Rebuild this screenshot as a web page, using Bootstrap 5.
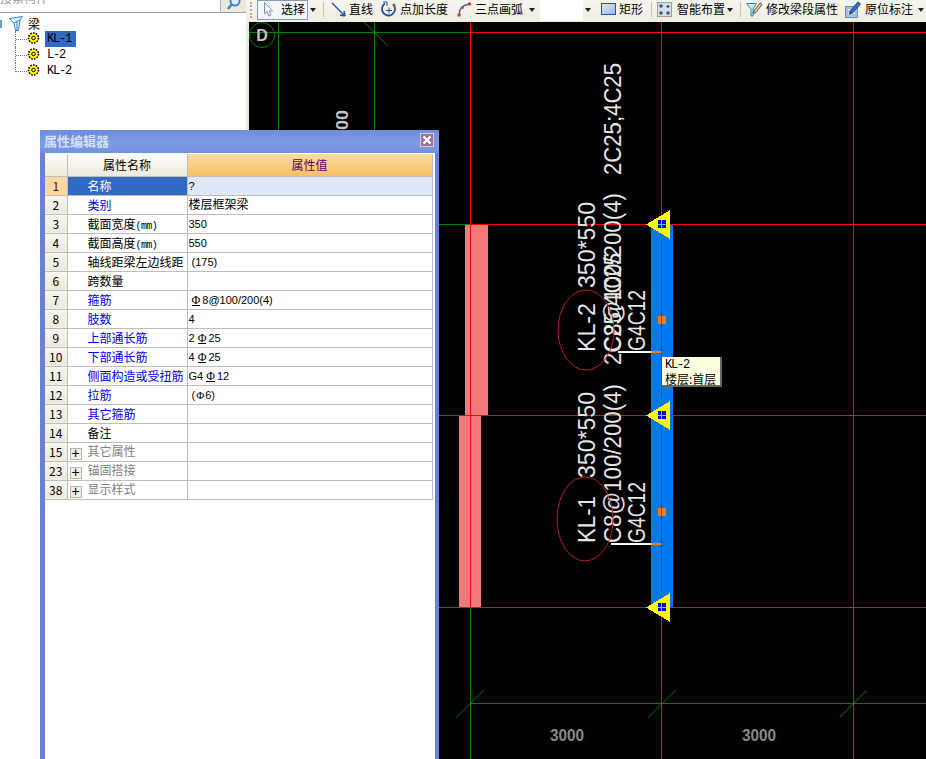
<!DOCTYPE html>
<html lang="zh-CN">
<head>
  <meta charset="UTF-8">
  <title>属性编辑器</title>
  <link href="https://cdn.jsdelivr.net/npm/bootstrap@5.3.3/dist/css/bootstrap.min.css" rel="stylesheet">
  <style>
    html, body { width: 926px; height: 759px; overflow: hidden; }
    body { position: relative; background: #fff; color: #000; font: 12px/16px "Noto Sans CJK SC", "Liberation Sans", sans-serif; }

    /* left tree */
    .tree-pane { width: 246px; flex: none; background: #fff; }
    .find-bar { height: 13px; border-bottom: 1px solid #8aa4b8; }
    .find-text { flex: 1; overflow: hidden; color: #9a9aa0; line-height: 12px; }
    .find-text span { display: block; margin-top: -8px; }
    .find-btn { width: 26px; background: #ece9d8; border-left: 1px solid #a8b8c4; overflow: hidden; }
    .tree-root { height: 15px; margin-top: 3px; }
    .twig { width: 2px; height: 8px; background: #6a9ac0; margin-right: 7px; }
    .root-name { margin-left: 5px; }
    .tree-list { list-style: none; margin: 0 0 0 15px; padding: 0; }
    .tree-list li { height: 16px; display: flex; border-left: 1px dotted #777; }
    .tree-list li:last-child { border-left: 0; }
    .conn { width: 11px; height: 9px; border-bottom: 1px dotted #777; }
    .tree-list li:last-child .conn { width: 12px; border-left: 1px dotted #777; }
    .lbl { margin-left: 5px; padding: 1px 2px 0; min-width: 31px; line-height: 15px; }
    .lbl.on { background: #316ac5; }
    .lat { font-family: "Liberation Mono", monospace; letter-spacing: -1.2px; }

    /* toolbar */
    .tool-strip { height: 22px; padding-left: 4px; background: linear-gradient(#f7f6ee, #efede0); white-space: nowrap; }
    .grip { width: 2px; height: 16px; margin-top: 2px; border-left: 2px dotted #b0ad98; }
    .tool { display: flex; align-items: center; gap: 3px; height: 20px; padding-bottom: 2px; }
    .tool-on { width: 51px; margin-left: 5px; padding-left: 6px; gap: 8px; background: #f4f6fb; border: 1px solid #7f9db9; }
    .caret-box { width: 10px; height: 20px; display: flex; justify-content: center; align-items: center; }
    .caret-box::after { content: ""; border: 3px solid transparent; border-top: 4px solid #222; border-bottom: 0; }
    .sep { width: 1px; height: 15px; margin-top: 2px; background: #c6c3b0; }
    .tool-field { width: 43px; height: 21px; background: #fff; }
    .l2 { margin-left: 2px; } .l3 { margin-left: 3px; } .l4 { margin-left: 4px; } .l5 { margin-left: 5px; }
    .l7 { margin-left: 7px; } .l8 { margin-left: 8px; } .l9 { margin-left: 9px; }
    .gap5 { gap: 5px; } .gap4 { gap: 4px; }

    /* drawing */
    .draw-wrap { position: relative; padding-left: 3px; background: #ece9d8; }
    .draw-wrap svg { display: block; background: #000; }
    .cad-txt { font-family: "Liberation Sans", sans-serif; font-size: 23px; fill: #e6e6e6; }
    .cad-dim { font-family: "Liberation Sans", sans-serif; font-size: 16px; font-weight: 700; fill: #8a8a8a; }
    .cad-dim.lite { fill: #c4c4c4; }
    .hint { position: absolute; left: 416px; top: 335px; width: 60px; height: 30px; padding: 1px 0 0 3px; background: #ffffe1; border-right: 2px solid #666; border-bottom: 2px solid #666; line-height: 14px; white-space: nowrap; }

    /* property window */
    .prop-win { position: absolute; left: 40px; top: 130px; width: 399px; height: 629px; background: #6b7fd7; padding: 0 4px 0 5px; box-shadow: inset 0 1px 0 #8ea4e6; }
    .win-head { height: 23px; background: linear-gradient(#6f8cde, #7d9be4 60%, #7391de); margin: 0 -4px 0 -5px; padding: 4px 5px 0 4px; }
    .win-title { font-size: 13px; font-weight: 700; color: #d3dff9; line-height: 14px; }
    .win-close { width: 14px; height: 14px; background: #a4708f; border: 1px solid #c9cfe8; margin-top: -1px; }
    .win-body { background: #fff; height: 606px; padding-top: 1px; }
    table.prop-table { width: 387px; table-layout: fixed; margin: 0; border-collapse: collapse; }
    table.prop-table th, table.prop-table td { height: 19px; padding: 0; border: 1px solid #bdbdbd; border-width: 0 1px 1px 0; font-weight: 400; font-size: 12px; line-height: 16px; white-space: nowrap; overflow: hidden; color: #000; vertical-align: middle; }
    table.prop-table th { height: 22px; text-align: center; background: linear-gradient(#fdfdfa, #ece9dc); }
    table.prop-table th.val-head { background: linear-gradient(#fbdc9f, #f3c063); color: #660066; }
    table.prop-table td.idx { text-align: center; background: linear-gradient(#f8f7f0, #ebe9dc); }
    table.prop-table td.idx.cur { background: #fcd9a0; color: #660033; }
    table.prop-table td.nm { padding-left: 20px; }
    table.prop-table td.nm.cur { background: #316ac5; color: #fff; }
    table.prop-table td.va { padding-left: 1px; font-family: "Liberation Sans", sans-serif; font-size: 11px; }
    table.prop-table td.va.cur { background: #dfe8f5; }
    table.prop-table td.link-nm { color: #0000ee; }
    table.prop-table td.grp { color: #808080; padding-left: 2px; }
    .han { font-family: "Noto Sans CJK SC", sans-serif; font-size: 12px; }
    .ind { margin-left: 3px; }
    .small-lat { font-family: "Liberation Mono", monospace; font-size: 10px; letter-spacing: -.6px; line-height: 1; }
    .rb { font-family: "Liberation Serif", serif; font-size: 12px; border-bottom: 1px solid #000; line-height: 9px; display: inline-block; margin: 0 2px 0 3px; }
    .rb-plain { font-family: "Liberation Serif", serif; margin: 0 1px; }
    .plus-box { display: inline-block; width: 12px; height: 12px; margin-right: 6px; border: 1px solid #b4b4a8; background: #f1f0e6; color: #000; font: 14px/9px "Liberation Sans", sans-serif; text-align: center; vertical-align: -2px; }
  </style>
</head>
<body class="d-flex">

  <aside class="tree-pane">
    <div class="find-bar d-flex">
      <div class="find-text"><span>搜索构件</span></div>
      <div class="find-btn d-flex justify-content-center">
        <svg width="16" height="13" viewBox="0 0 16 13"><circle cx="9" cy="1" r="4.500" fill="#dcecf8" stroke="#3f86c8" stroke-width="2"/><path d="M5.500 4.500 2 9" stroke="#3f86c8" stroke-width="2.500"/></svg>
      </div>
    </div>
    <div class="tree-root d-flex align-items-center">
      <span class="twig"></span>
      <svg width="14" height="15" viewBox="0 0 14 15"><path d="M.5 2.500 13.500.5 11 4 9.500 14.500H6.500L5 7Z" fill="#eaf4fb" stroke="#2f86c6"/><path d="M.5 2.500 5 7l6-3M8 5v9" fill="none" stroke="#2f86c6"/></svg>
      <span class="root-name">梁</span>
    </div>
    <ul class="tree-list">
      <li><span class="conn"></span>
        <svg width="13" height="15" viewBox="0 0 13 15"><circle cx="6.500" cy="7" r="5" fill="#ff0" stroke="#000" stroke-width="1.600" stroke-dasharray="1.600 1.200"/><circle cx="6.500" cy="7" r="1.800" fill="#ff0" stroke="#000"/></svg>
        <span class="lbl on lat">KL-1</span></li>
      <li><span class="conn"></span>
        <svg width="13" height="15" viewBox="0 0 13 15"><circle cx="6.500" cy="7" r="5" fill="#ff0" stroke="#000" stroke-width="1.600" stroke-dasharray="1.600 1.200"/><circle cx="6.500" cy="7" r="1.800" fill="#ff0" stroke="#000"/></svg>
        <span class="lbl lat">L-2</span></li>
      <li><span class="conn"></span>
        <svg width="13" height="15" viewBox="0 0 13 15"><circle cx="6.500" cy="7" r="5" fill="#ff0" stroke="#000" stroke-width="1.600" stroke-dasharray="1.600 1.200"/><circle cx="6.500" cy="7" r="1.800" fill="#ff0" stroke="#000"/></svg>
        <span class="lbl lat">KL-2</span></li>
    </ul>
  </aside>

  <main class="flex-grow-1 d-flex flex-column">
    <div class="tool-strip d-flex align-items-start">
      <span class="grip"></span>
      <div class="tool tool-on">
        <svg width="9" height="15" viewBox="0 0 9 15"><path d="M.5.5V12L3 9.500 5 14l2-1-2-4h3.500Z" fill="#fff" stroke="#7d8fb8"/></svg>
        <span>选择</span>
      </div>
      <span class="caret-box"></span>
      <span class="sep l5"></span>
      <div class="tool l7">
        <svg width="15" height="15" viewBox="0 0 15 15"><path d="M1 1 14 14M14 14l-1-5M14 14 9 13" fill="none" stroke="#1d4f9c" stroke-width="1.400"/></svg>
        <span>直线</span>
      </div>
      <div class="tool l8">
        <svg width="16" height="17" viewBox="0 0 16 17"><path d="M4 2.500a6.500 6.500 0 1 0 9 2" fill="none" stroke="#1d4f9c" stroke-width="1.800"/><path d="M2 1h4v4" fill="none" stroke="#1d4f9c"/><path d="M5 9.500h6M8 6.500v6" stroke="#1d4f9c"/><circle cx="13" cy="4" r="1.600" fill="#d2443a"/></svg>
        <span>点加长度</span>
      </div>
      <div class="tool l9">
        <svg width="15" height="15" viewBox="0 0 15 15"><path d="M2 13C2 7 6 3 12 2" fill="none" stroke="#2c5fa8" stroke-width="1.400"/><circle cx="2" cy="13" r="1.800" fill="#d2443a"/><circle cx="12.500" cy="2" r="1.800" fill="#d2443a"/><circle cx="5.500" cy="5.500" r="1.400" fill="#d2443a"/></svg>
        <span>三点画弧</span>
      </div>
      <span class="caret-box l4"></span>
      <span class="tool-field l3"></span>
      <span class="caret-box"></span>
      <div class="tool l8">
        <svg width="15" height="12" viewBox="0 0 15 12"><defs><linearGradient id="rectFill" x1="0" y1="0" x2="1" y2="1"><stop offset="0" stop-color="#e4ecfb"/><stop offset="1" stop-color="#96b2ea"/></linearGradient></defs><rect x=".5" y=".5" width="14" height="11" fill="url(#rectFill)" stroke="#2a50a8"/></svg>
        <span>矩形</span>
      </div>
      <span class="sep l8"></span>
      <div class="tool l5 gap5">
        <svg width="15" height="15" viewBox="0 0 15 15"><rect x=".5" y=".5" width="14" height="14" fill="#d6deea" stroke="#555" stroke-dasharray="1 1"/><path d="M4 2v4M2 4h4M11 3v3M9.500 4.500h3M4 9v4M2 11h4M11 9v4M9 11h4" stroke="#16305c"/></svg>
        <span>智能布置</span>
      </div>
      <span class="caret-box"></span>
      <span class="sep l5"></span>
      <div class="tool l5">
        <svg width="17" height="17" viewBox="0 0 17 17"><path d="M.5 2.500h10L7 8v7H5V8Z" fill="#d4ecf8" stroke="#2b7ec0"/><path d="M8 10 14 2l2 1.500-6 8-2.500 1Z" fill="#f2cf72" stroke="#555"/></svg>
        <span>修改梁段属性</span>
      </div>
      <div class="tool l7 gap4">
        <svg width="16" height="17" viewBox="0 0 16 17"><rect x=".5" y="5.500" width="12" height="11" fill="#a9c0dd" stroke="#6c8db8"/><path d="M3 9h7M3 12h7" stroke="#fff"/><path d="M5 10 13 1l2.500 2-8 9-3 1Z" fill="#2f6ec0" stroke="#1c4b90"/></svg>
        <span>原位标注</span>
      </div>
      <span class="caret-box l3"></span>
    </div>

    <div class="draw-wrap flex-grow-1">
      <svg width="677" height="737" viewBox="249 22 677 737">
        <!-- beams -->
        <rect x="465" y="225" width="23" height="190" fill="#f27a7a"/>
        <rect x="459" y="416" width="22" height="191" fill="#f27a7a"/>
        <rect x="651" y="224" width="22" height="383" fill="#0078f0"/>

        <!-- axis grid -->
        <g stroke="#008000" fill="none" shape-rendering="crispEdges">
          <path d="M278.500 22V759M374.500 22V759M470.500 607V759M661.500 607V759M853.500 607V759"/>
          <path d="M249 32.500H470M249 224.500H470M249 415.500H470M249 607.500H470M470 703.500H926"/>
        </g>
        <g stroke="#ff0000" fill="none" shape-rendering="crispEdges">
          <path d="M470.500 22V607M661.500 22V607M853.500 22V607"/>
          <path d="M470 32.500H926M470 224.500H926M470 415.500H926M470 607.500H926"/>
        </g>
        <g stroke="#008000" fill="none">
          <path d="M364 22 388 46M456 717.500 484 690M648 717.500 676 690M840 717 867 690"/>
          <circle cx="262" cy="35" r="12.500"/>
        </g>

        <!-- labels -->
        <text class="cad-dim lite" x="262" y="41" text-anchor="middle">D</text>
        <text class="cad-dim lite" transform="rotate(-90 348 150)" x="348" y="150" textLength="40" lengthAdjust="spacingAndGlyphs">3000</text>
        <text class="cad-dim" x="550" y="741" textLength="34" lengthAdjust="spacingAndGlyphs">3000</text>
        <text class="cad-dim" x="742" y="741" textLength="34" lengthAdjust="spacingAndGlyphs">3000</text>

        <text class="cad-txt" transform="rotate(-90 595 352)" x="595" y="352" textLength="49" lengthAdjust="spacingAndGlyphs">KL-2</text>
        <text class="cad-txt" transform="rotate(-90 595 288)" x="595" y="288" textLength="86" lengthAdjust="spacingAndGlyphs">350*550</text>
        <text class="cad-txt" transform="rotate(-90 621 352)" x="621" y="352" textLength="159" lengthAdjust="spacingAndGlyphs">C8@100/200(4)</text>
        <text class="cad-txt" transform="rotate(-90 621 365)" x="621" y="365" textLength="112" lengthAdjust="spacingAndGlyphs">2C25;4C25</text>
        <text class="cad-txt" transform="rotate(-90 645 351)" x="645" y="351" textLength="61" lengthAdjust="spacingAndGlyphs">G4C12</text>

        <text class="cad-txt" transform="rotate(-90 595 543)" x="595" y="543" textLength="47" lengthAdjust="spacingAndGlyphs">KL-1</text>
        <text class="cad-txt" transform="rotate(-90 595 478)" x="595" y="478" textLength="86" lengthAdjust="spacingAndGlyphs">350*550</text>
        <text class="cad-txt" transform="rotate(-90 621 543)" x="621" y="543" textLength="159" lengthAdjust="spacingAndGlyphs">C8@100/200(4)</text>
        <text class="cad-txt" transform="rotate(-90 621 175)" x="621" y="175" textLength="112" lengthAdjust="spacingAndGlyphs">2C25;4C25</text>
        <text class="cad-txt" transform="rotate(-90 645 543)" x="645" y="543" textLength="61" lengthAdjust="spacingAndGlyphs">G4C12</text>

        <ellipse cx="586" cy="330" rx="28" ry="40" fill="none" stroke="#b8202c"/>
        <ellipse cx="585" cy="519" rx="28" ry="42" fill="none" stroke="#b8202c"/>

        <!-- leaders and grips -->
        <rect x="618" y="351" width="33" height="2" fill="#fff"/>
        <rect x="651" y="351" width="10" height="2" fill="#ff8000"/>
        <rect x="611" y="543" width="40" height="2" fill="#fff"/>
        <rect x="651" y="543" width="10" height="2" fill="#ff8000"/>
        <rect x="658" y="316" width="8" height="8" fill="#ff8000"/>
        <rect x="658" y="508" width="8" height="8" fill="#ff8000"/>
        <path d="M661.500 316V324M661.500 508V516" stroke="#ff0000" shape-rendering="crispEdges"/>

        <g shape-rendering="crispEdges">
          <path d="M646 224.500 670 210V239ZM646 415.500 670 401V430ZM646 607.500 670 593V622Z" fill="#ff0"/>
          <path d="M658 220h8v8h-8ZM658 411h8v8h-8ZM658 603h8v8h-8Z" fill="#0000e0"/>
          <path d="M658 224.500h8M661.500 220v8M658 415.500h8M661.500 411v8M658 607.500h8M661.500 603v8" stroke="#33ddff"/>
        </g>
      </svg>
      <div class="hint"><div class="lat">KL-2</div><div>楼层:首层</div></div>
    </div>
  </main>

  <section class="prop-win">
    <div class="win-head d-flex justify-content-between">
      <span class="win-title">属性编辑器</span>
      <span class="win-close d-flex align-items-center justify-content-center">
        <svg width="10" height="10" viewBox="0 0 10 10"><path d="M1.500 1.500 8.500 8.500M8.500 1.500 1.500 8.500" stroke="#fff" stroke-width="2.400"/></svg>
      </span>
    </div>
    <div class="win-body">
      <table class="table prop-table">
        <colgroup><col width="22"><col width="120"><col width="245"></colgroup>
        <thead>
          <tr><th></th><th>属性名称</th><th class="val-head">属性值</th></tr>
        </thead>
        <tbody>
          <tr><td class="idx cur">1</td><td class="nm cur">名称</td><td class="va cur">?</td></tr>
          <tr><td class="idx">2</td><td class="nm link-nm">类别</td><td class="va"><span class="han">楼层框架梁</span></td></tr>
          <tr><td class="idx">3</td><td class="nm">截面宽度<span class="small-lat">(mm)</span></td><td class="va">350</td></tr>
          <tr><td class="idx">4</td><td class="nm">截面高度<span class="small-lat">(mm)</span></td><td class="va">550</td></tr>
          <tr><td class="idx">5</td><td class="nm">轴线距梁左边线距</td><td class="va"><span class="ind">(175)</span></td></tr>
          <tr><td class="idx">6</td><td class="nm">跨数量</td><td class="va"></td></tr>
          <tr><td class="idx">7</td><td class="nm link-nm">箍筋</td><td class="va"><span class="rb">Φ</span>8@100/200(4)</td></tr>
          <tr><td class="idx">8</td><td class="nm link-nm">肢数</td><td class="va">4</td></tr>
          <tr><td class="idx">9</td><td class="nm link-nm">上部通长筋</td><td class="va">2<span class="rb">Φ</span>25</td></tr>
          <tr><td class="idx">10</td><td class="nm link-nm">下部通长筋</td><td class="va">4<span class="rb">Φ</span>25</td></tr>
          <tr><td class="idx">11</td><td class="nm link-nm">侧面构造或受扭筋</td><td class="va">G4<span class="rb">Φ</span>12</td></tr>
          <tr><td class="idx">12</td><td class="nm link-nm">拉筋</td><td class="va"><span class="ind">(<span class="rb-plain">Φ</span>6)</span></td></tr>
          <tr><td class="idx">13</td><td class="nm link-nm">其它箍筋</td><td class="va"></td></tr>
          <tr><td class="idx">14</td><td class="nm">备注</td><td class="va"></td></tr>
          <tr><td class="idx">15</td><td class="grp"><span class="plus-box">+</span>其它属性</td><td class="va"></td></tr>
          <tr><td class="idx">23</td><td class="grp"><span class="plus-box">+</span>锚固搭接</td><td class="va"></td></tr>
          <tr><td class="idx">38</td><td class="grp"><span class="plus-box">+</span>显示样式</td><td class="va"></td></tr>
        </tbody>
      </table>
    </div>
  </section>

  <script src="https://cdn.jsdelivr.net/npm/bootstrap@5.3.3/dist/js/bootstrap.bundle.min.js"></script>
</body>
</html>
